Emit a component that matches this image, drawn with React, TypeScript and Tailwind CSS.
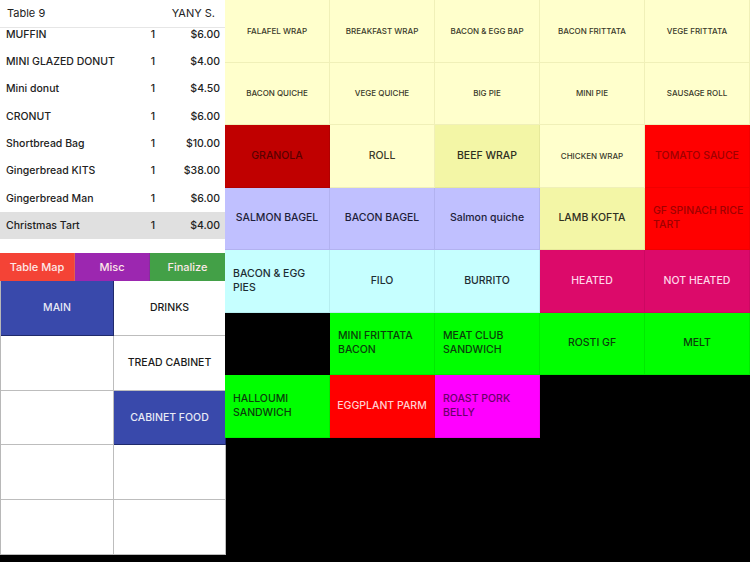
import React from "react";

type Order = { name: string; qty: number; price: string; selected?: boolean };

const orders: Order[] = [
  { name: "MUFFIN", qty: 1, price: "$6.00" },
  { name: "MINI GLAZED DONUT", qty: 1, price: "$4.00" },
  { name: "Mini donut", qty: 1, price: "$4.50" },
  { name: "CRONUT", qty: 1, price: "$6.00" },
  { name: "Shortbread Bag", qty: 1, price: "$10.00" },
  { name: "Gingerbread KITS", qty: 1, price: "$38.00" },
  { name: "Gingerbread Man", qty: 1, price: "$6.00" },
  { name: "Christmas Tart", qty: 1, price: "$4.00", selected: true },
];

type Tile = { label: string; cls: string; left?: boolean; small?: boolean };

const yellow = "bg-[#ffffcc] text-[#3a3a2a] border-[#f0f0b8]";
const lime = "bg-[#f3f6a6] text-[#2f2f1f] border-[#e6e99a]";
const lav = "bg-[#c0c0ff] text-[#1e1e3a] border-[#b2b2f0]";
const cyan = "bg-[#c6ffff] text-[#1d2d33] border-[#b6eef0]";
const green = "bg-[#00ff00] text-[#0b3d0b] border-[#00ea00]";
const red = "bg-[#ff0000] text-[#a00000] border-[#f00000]";
const crimson = "bg-[#dc0a6a] text-[#ffd6e8] border-[#cc0862]";

const tiles: (Tile | null)[] = [
  { label: "FALAFEL WRAP", cls: yellow, small: true },
  { label: "BREAKFAST WRAP", cls: yellow, small: true },
  { label: "BACON & EGG BAP", cls: yellow, small: true },
  { label: "BACON FRITTATA", cls: yellow, small: true },
  { label: "VEGE FRITTATA", cls: yellow, small: true },
  { label: "BACON QUICHE", cls: yellow, small: true },
  { label: "VEGE QUICHE", cls: yellow, small: true },
  { label: "BIG PIE", cls: yellow, small: true },
  { label: "MINI PIE", cls: yellow, small: true },
  { label: "SAUSAGE ROLL", cls: yellow, small: true },
  { label: "GRANOLA", cls: "bg-[#c00000] text-[#5a0000] border-[#b00000]" },
  { label: "ROLL", cls: yellow },
  { label: "BEEF WRAP", cls: lime },
  { label: "CHICKEN WRAP", cls: yellow, small: true },
  { label: "TOMATO SAUCE", cls: red },
  { label: "SALMON BAGEL", cls: lav },
  { label: "BACON BAGEL", cls: lav },
  { label: "Salmon quiche", cls: lav },
  { label: "LAMB KOFTA", cls: lime },
  { label: "GF SPINACH RICE TART", cls: red, left: true },
  { label: "BACON & EGG PIES", cls: cyan, left: true },
  { label: "FILO", cls: cyan },
  { label: "BURRITO", cls: cyan },
  { label: "HEATED", cls: crimson },
  { label: "NOT HEATED", cls: crimson },
  null,
  { label: "MINI FRITTATA BACON", cls: green, left: true },
  { label: "MEAT CLUB SANDWICH", cls: green, left: true },
  { label: "ROSTI GF", cls: green },
  { label: "MELT", cls: green },
  { label: "HALLOUMI SANDWICH", cls: green, left: true },
  { label: "EGGPLANT PARM", cls: "bg-[#ff0000] text-[#ffd0d0] border-[#f00000]" },
  { label: "ROAST PORK BELLY", cls: "bg-[#ff00ff] text-[#6a006a] border-[#f000f0]", left: true },
];

const categories: { label: string; active?: boolean }[] = [
  { label: "MAIN", active: true },
  { label: "DRINKS" },
  { label: "" },
  { label: "TREAD CABINET" },
  { label: "" },
  { label: "CABINET FOOD", active: true },
  { label: "" },
  { label: "" },
  { label: "" },
  { label: "" },
];

export default function App() {
  return (
    <div
      className="flex h-[562px] w-[750px] overflow-hidden bg-black"
      style={{ fontFamily: "Inter, 'Liberation Sans', sans-serif" }}
    >
      {/* left side: ticket + categories */}
      <div className="flex w-[225px] shrink-0 flex-col">
        <div className="flex h-[28px] items-center justify-between border-b border-[#e6e6e6] bg-white pl-[7px] pr-[10px] text-[11px] text-[#222]">
          <span>Table 9</span>
          <span>YANY S.</span>
        </div>
        <div className="h-[211px] overflow-hidden bg-white">
          <div className="-mt-[7px]">
            {orders.map((o) => (
              <div
                key={o.name}
                className={`flex h-[27.3px] items-center pl-[6px] pr-[5px] text-[10.5px] font-medium text-[#222] ${
                  o.selected ? "bg-[#e0e0e0]" : ""
                }`}
              >
                <span className="flex-1">{o.name}</span>
                <span className="w-[14px] text-center">{o.qty}</span>
                <span className="w-[60px] text-right">{o.price}</span>
              </div>
            ))}
          </div>
        </div>
        <div className="h-[14px] bg-white" />
        <div className="flex h-[28px] text-[11px] font-medium text-[#fde8e8]">
          <div className="flex w-[75px] items-center justify-center border-r border-[#e06050] bg-[#f44336]">
            Table Map
          </div>
          <div className="flex w-[75px] items-center justify-center border-r border-[#8a2aa0] bg-[#9c27b0]">
            Misc
          </div>
          <div className="flex flex-1 items-center justify-center bg-[#43a047]">
            Finalize
          </div>
        </div>
        <div className="grid grid-cols-[113px_112px] grid-rows-[repeat(5,54.8px)] border-l border-[#b8b8b8] bg-white">
          {categories.map((c, i) => (
            <div
              key={i}
              className={`flex items-center justify-center border-b border-r text-[10.5px] font-medium ${
                c.active
                  ? "border-[#1f2a6b] bg-[#3949ab] text-[#e8eaf6]"
                  : "border-[#bdbdbd] bg-white text-[#1a1a1a]"
              }`}
            >
              {c.label}
            </div>
          ))}
        </div>
      </div>

      {/* right side: product buttons */}
      <div className="grid flex-1 grid-cols-5 grid-rows-[repeat(7,62.5px)] content-start">
        {tiles.map((t, i) =>
          t ? (
            <div
              key={i}
              className={`flex items-center border-b border-r font-medium ${t.cls} ${
                t.left ? "pl-[8px] pr-[2px] text-left" : "justify-center px-1 text-center"
              } ${t.small ? "text-[8px]" : "text-[10.5px] leading-[14px]"}`}
            >
              {t.label}
            </div>
          ) : (
            <div key={i} className="bg-black" />
          )
        )}
      </div>
    </div>
  );
}
